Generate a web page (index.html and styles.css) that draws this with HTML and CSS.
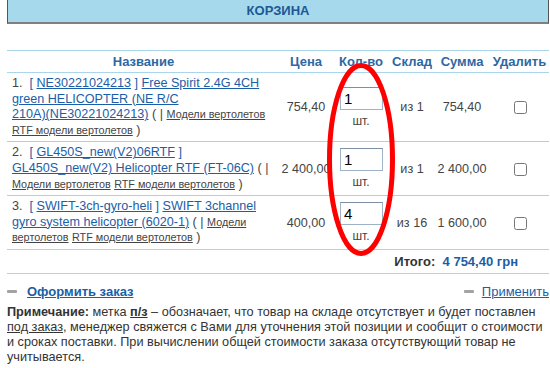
FILE: index.html
```html
<!DOCTYPE html>
<html lang="ru">
<head>
<meta charset="utf-8">
<title>Корзина</title>
<link rel="stylesheet" href="styles.css">
</head>
<body>
<div class="page">
  <div class="titlebar">КОРЗИНА</div>
  <table class="cart">
    <colgroup>
      <col class="c-name"><col class="c-price"><col class="c-qty"><col class="c-stock"><col class="c-sum"><col class="c-del">
    </colgroup>
    <thead>
      <tr><th>Название</th><th>Цена</th><th>Кол-во</th><th>Склад</th><th>Сумма</th><th>Удалить</th></tr>
    </thead>
    <tbody>
      <tr>
        <td class="name">1.&nbsp; <span class="br">[</span> <a href="#">NE30221024213</a> <span class="br">]</span> <a href="#">Free Spirit 2.4G 4CH green HELICOPTER (NE R/C <span class="nw">210A)(NE30221024213)</span></a> ( | <a class="cat" href="#">Модели вертолетов</a> <a class="cat" href="#">RTF модели вертолетов</a> )</td>
        <td class="num">754,40</td>
        <td class="qty"><input class="qin" type="text" value="1"><div class="unit">шт.</div></td>
        <td class="num">из 1</td>
        <td class="num">754,40</td>
        <td class="num"><input type="checkbox"></td>
      </tr>
      <tr>
        <td class="name">2.&nbsp; <span class="br">[</span> <a href="#">GL450S_new(V2)06RTF</a> <span class="br">]</span> <a href="#">GL450S_new(V2) Helicopter RTF (FT-06C)</a> ( | <a class="cat" href="#">Модели вертолетов</a> <a class="cat" href="#">RTF модели вертолетов</a> )</td>
        <td class="num">2 400,00</td>
        <td class="qty"><input class="qin" type="text" value="1"><div class="unit">шт.</div></td>
        <td class="num">из 1</td>
        <td class="num">2 400,00</td>
        <td class="num"><input type="checkbox"></td>
      </tr>
      <tr>
        <td class="name">3.&nbsp; <span class="br">[</span> <a href="#">SWIFT-3ch-gyro-heli</a> <span class="br">]</span> <a href="#">SWIFT 3channel gyro system helicopter (6020-1)</a> ( | <a class="cat" href="#">Модели вертолетов</a> <a class="cat" href="#">RTF модели вертолетов</a> )</td>
        <td class="num">400,00</td>
        <td class="qty"><input class="qin" type="text" value="4"><div class="unit">шт.</div></td>
        <td class="num">из 16</td>
        <td class="num">1 600,00</td>
        <td class="num"><input type="checkbox"></td>
      </tr>
    </tbody>
    <tfoot>
      <tr><td colspan="6" class="total"><b>Итого:</b>&nbsp; <span class="sum">4 754,40 грн</span></td></tr>
    </tfoot>
  </table>
  <div class="actions">
    <a class="act order" href="#"><span class="dash"></span><span class="lbl">Оформить заказ</span></a>
    <a class="act apply" href="#"><span class="dash"></span><span class="lbl">Применить</span></a>
  </div>
  <p class="note"><b>Примечание:</b> метка <b class="u">п/з</b> – обозначает, что товар на складе отсутствует и будет поставлен <span class="u">под заказ</span>, менеджер свяжется с Вами для уточнения этой позиции и сообщит о стоимости и сроках поставки. При вычислении общей стоимости заказа отсутствующий товар не учитывается.</p>
  <svg class="annot" width="550" height="368" viewBox="0 0 550 368" aria-hidden="true">
    <ellipse cx="361" cy="159.5" rx="31.5" ry="94" fill="none" stroke="#ff0000" stroke-width="5"/>
  </svg>
</div>
</body>
</html>
```

FILE: styles.css
```css
html, body {
  margin: 0;
  padding: 0;
  background: #ffffff;
}
body {
  font-family: "Liberation Sans", Arial, sans-serif;
  font-size: 13px;
  color: #3a3a3a;
  overflow: hidden;
}
.page {
  margin-left: 7px;
  width: 542px;
}
.titlebar {
  height: 22px;
  line-height: 22px;
  background: #a7d9ec;
  border-left: 1px solid #555;
  border-right: 1px solid #555;
  border-bottom: 2px solid #808080;
  text-align: center;
  font-weight: bold;
  color: #1b5896;
  box-sizing: content-box;
}
.cart {
  margin-top: 26px;
  width: 542px;
  border-collapse: collapse;
  table-layout: fixed;
}
.c-name { width: 273px; }
.c-price { width: 52px; }
.c-qty { width: 58px; }
.c-stock { width: 44px; }
.c-sum { width: 56px; }
.c-del { width: 59px; }
.cart thead th {
  border-top: 1px solid #a9d6ea;
  border-bottom: 1px solid #a9d6ea;
  height: 21px;
  padding: 0;
  font-weight: bold;
  color: #2d68a4;
  text-align: center;
  white-space: nowrap;
}
.cart tbody td {
  border-bottom: 1px solid #c8c8c8;
  padding: 3px 0;
  vertical-align: middle;
}
.cart tbody tr:last-child td {
  border-bottom: 1px solid #a9d6ea;
}
.name {
  padding-left: 5px !important;
  padding-right: 2px !important;
  line-height: 15.6px;
  font-size: 12.6px;
  color: #444;
}
.name a {
  color: #1b5ea6;
}
.nw {
  white-space: nowrap;
}
.name .br {
  color: #1b5ea6;
}
.name a.cat {
  font-size: 10.8px;
  color: #444;
}
.num {
  text-align: center;
  white-space: nowrap;
  font-size: 12.6px;
  color: #444;
}
.qty {
  text-align: center;
}
.qin {
  display: block;
  box-sizing: border-box;
  width: 43px;
  height: 23px;
  margin: 0 auto 0 8px;
  padding: 0 3px;
  border: 1px solid #9fb3c8;
  border-top-color: #7f8fa3;
  font-family: "Liberation Sans", Arial, sans-serif;
  font-size: 15px;
  color: #000;
}
.unit {
  font-size: 12px;
  line-height: 14px;
  margin-top: 4px;
  color: #444;
}
.cart input[type="checkbox"] {
  width: 13px;
  height: 13px;
  margin: 0 0 0 1px;
  vertical-align: middle;
}
.total {
  height: 23px;
  border-bottom: 1px solid #a9d6ea;
  text-align: right;
  padding: 0 31px 0 0;
  font-weight: bold;
  color: #333;
}
.total .sum {
  color: #1b5ea6;
}
.actions {
  display: flex;
  justify-content: space-between;
  margin-top: 10px;
  line-height: 16px;
}
.act {
  display: flex;
  align-items: center;
  color: #1b5ea6;
  text-decoration: none;
}
.act .lbl {
  text-decoration: underline;
}
.order .lbl {
  font-weight: bold;
}
.dash {
  display: inline-block;
  width: 10px;
  height: 3px;
  background: #a3a3a3;
  border-radius: 1px;
  margin-right: 10px;
}
.apply .dash {
  margin-right: 8px;
}
.note {
  margin: 5px 0 0 0;
  font-size: 12.7px;
  line-height: 15px;
  color: #333;
}
.u {
  text-decoration: underline;
}
.annot {
  position: absolute;
  left: 0;
  top: 0;
  pointer-events: none;
}
```
